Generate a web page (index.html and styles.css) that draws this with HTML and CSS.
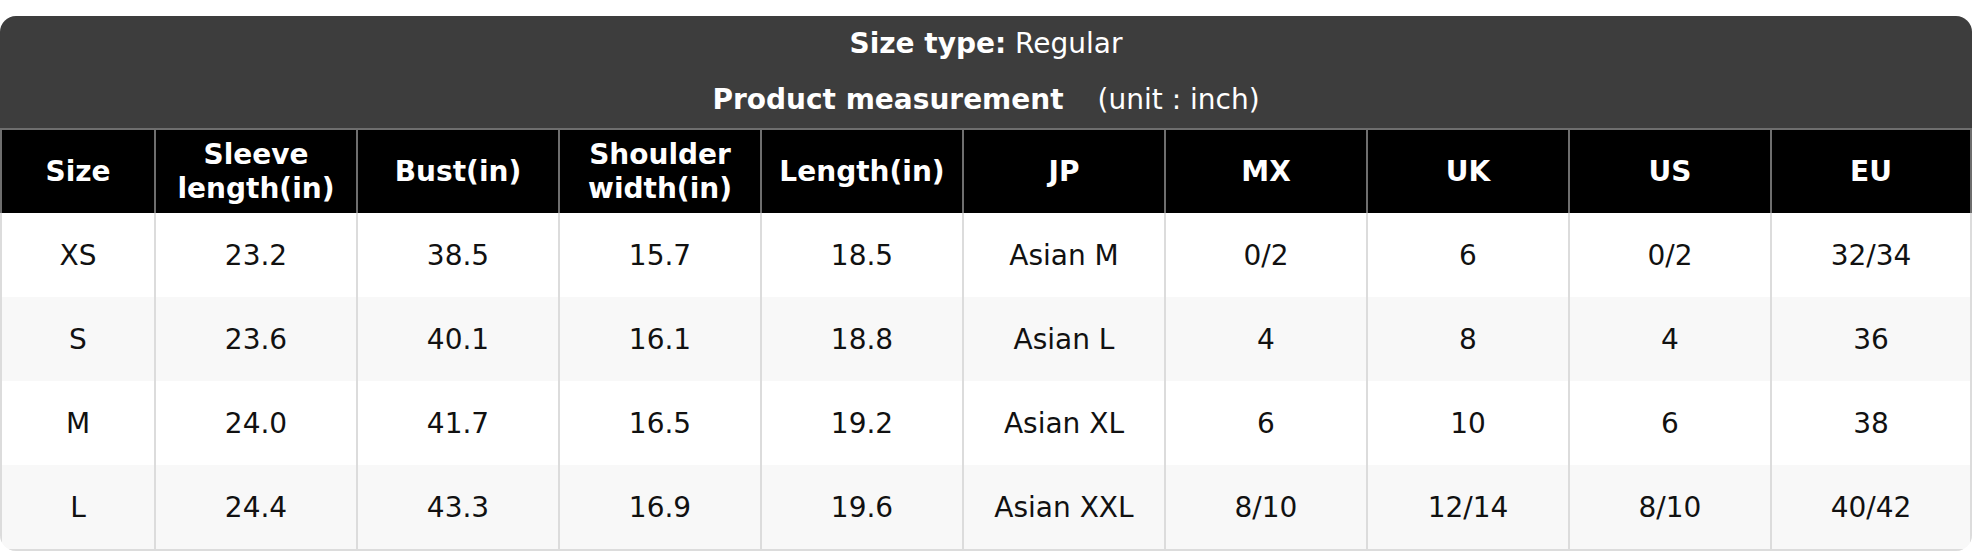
FILE: index.html
```html
<!DOCTYPE html>
<html>
<head>
<meta charset="utf-8">
<link rel="stylesheet" href="styles.css">
</head>
<body>
<div class="sheet">
  <div class="title">
    <div class="title-line"><b>Size type:</b> Regular</div>
    <div class="title-line"><b>Product measurement</b><span class="unit">(unit : inch)</span></div>
  </div>
  <table class="chart">
    <colgroup>
      <col class="col-first"><col><col><col><col><col><col><col><col><col>
    </colgroup>
    <thead>
      <tr>
        <th>Size</th><th>Sleeve<br>length(in)</th><th>Bust(in)</th><th>Shoulder<br>width(in)</th><th>Length(in)</th><th>JP</th><th>MX</th><th>UK</th><th>US</th><th>EU</th>
      </tr>
    </thead>
    <tbody>
      <tr><td>XS</td><td>23.2</td><td>38.5</td><td>15.7</td><td>18.5</td><td>Asian M</td><td>0/2</td><td>6</td><td>0/2</td><td>32/34</td></tr>
      <tr><td>S</td><td>23.6</td><td>40.1</td><td>16.1</td><td>18.8</td><td>Asian L</td><td>4</td><td>8</td><td>4</td><td>36</td></tr>
      <tr><td>M</td><td>24.0</td><td>41.7</td><td>16.5</td><td>19.2</td><td>Asian XL</td><td>6</td><td>10</td><td>6</td><td>38</td></tr>
      <tr><td>L</td><td>24.4</td><td>43.3</td><td>16.9</td><td>19.6</td><td>Asian XXL</td><td>8/10</td><td>12/14</td><td>8/10</td><td>40/42</td></tr>
    </tbody>
  </table>
</div>
</body>
</html>
```
FILE: styles.css
```css
html, body {
  margin: 0;
  padding: 0;
  background: #fff;
}
body {
  font-family: "DejaVu Sans", sans-serif;
  font-size: 28px;
  color: #111;
}
.sheet {
  margin-top: 16px;
  width: 1972px;
  border-radius: 16px;
  overflow: hidden;
  background: #fff;
}
.title {
  background: #3d3d3d;
  color: #fff;
  text-align: center;
}
.title-line {
  height: 56px;
  line-height: 56px;
}
.unit {
  margin-left: 34px;
}
.chart {
  width: 100%;
  border-collapse: separate;
  border-spacing: 0;
  table-layout: fixed;
}
.col-first {
  width: 154px;
}
.chart th {
  background: #000;
  color: #fff;
  font-weight: bold;
  height: 85px;
  padding: 0;
  line-height: 1.18;
  border-top: 2px solid #6e6e6e;
  border-left: 2px solid #6e6e6e;
  box-sizing: border-box;
}
.chart th:last-child {
  border-right: 2px solid #6e6e6e;
}
.chart td {
  height: 84px;
  padding: 0;
  text-align: center;
  border-left: 2px solid #dcdcdc;
  box-sizing: border-box;
}
.chart td:last-child {
  border-right: 2px solid #dcdcdc;
}
.chart tbody tr:nth-child(even) td {
  background: #f8f8f8;
}
.chart tbody tr:last-child td {
  border-bottom: 2px solid #dcdcdc;
  height: 86px;
}
```
